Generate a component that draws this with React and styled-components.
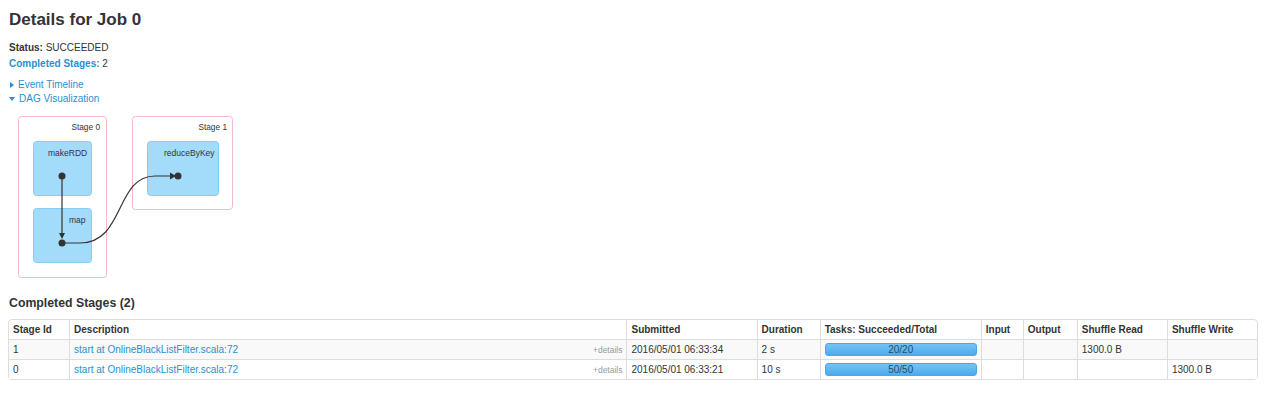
import React from 'react'
import styled, { createGlobalStyle } from 'styled-components'

const GlobalStyle = createGlobalStyle`
  body {
    margin: 0;
    background: #fff;
    font-family: "Liberation Sans", Arial, sans-serif;
    color: #333;
  }
`

const linkBlue = '#2a8fd0'

const Page = styled.div`
  padding: 0 8px 20px 8px;
  font-size: 10px;
`

const Title = styled.h3`
  margin: 10px 0 0 1px;
  font-size: 17px;
  line-height: 20px;
  font-weight: 700;
  color: #333;
`

const Summary = styled.ul`
  list-style: none;
  margin: 10px 0 0 1px;
  padding: 0;
  line-height: 16px;
`

const Label = styled.strong`
  color: ${props => props.link ? linkBlue : '#333'};
`

const Toggles = styled.div`
  margin: 6px 0 0 1px;
  line-height: 14px;
`

const Toggle = styled.a`
  display: flex;
  align-items: center;
  gap: 4px;
  color: ${linkBlue};
  text-decoration: none;
  cursor: pointer;
`

const Arrow = styled.span`
  display: inline-block;
  width: 0;
  height: 0;
  ${props => props.open ? `
    border-left: 3px solid transparent;
    border-right: 3px solid transparent;
    border-top: 4px solid ${linkBlue};
  ` : `
    border-top: 3px solid transparent;
    border-bottom: 3px solid transparent;
    border-left: 4px solid ${linkBlue};
    margin-left: 1px;
  `}
`

const Graph = styled.svg`
  display: block;
  margin-top: 4px;
  font-family: "Liberation Sans", Arial, sans-serif;
`

const Heading = styled.h4`
  margin: 13px 0 0 1px;
  font-size: 12.3px;
  line-height: 16px;
  font-weight: 700;
  color: #333;
`

const Table = styled.table`
  margin-top: 8px;
  width: 1250px;
  table-layout: fixed;
  border-collapse: separate;
  border-spacing: 0;
  border: 1px solid #ddd;
  border-radius: 4px;
  font-size: 10px;
`

const Th = styled.th`
  height: 19px;
  padding: 0 4px;
  text-align: left;
  font-weight: 700;
  border-left: ${props => props.first ? 'none' : '1px solid #ddd'};
`

const Row = styled.tr`
  background: ${props => props.odd ? '#f9f9f9' : '#fff'};
`

const Td = styled.td`
  height: 19px;
  padding: 0 4px;
  border-top: 1px solid #ddd;
  border-left: ${props => props.first ? 'none' : '1px solid #ddd'};
  white-space: nowrap;
`

const DescCell = styled.div`
  display: flex;
  justify-content: space-between;
  align-items: center;
`

const Link = styled.a`
  color: ${linkBlue};
  text-decoration: none;
`

const Details = styled.span`
  font-size: 8.5px;
  color: #999;
`

const Progress = styled.div`
  height: 13px;
  border-radius: 3px;
  background: linear-gradient(to bottom, #72c4f6, #4eaaec);
  border: 1px solid #4aa6e6;
  box-sizing: border-box;
  display: flex;
  align-items: center;
  justify-content: center;
  color: #2d4a60;
  font-size: 10px;
`

const columns = [60, 557, 130, 63, 161, 42, 54, 90, 90]
const headers = [
  'Stage Id', 'Description', 'Submitted', 'Duration', 'Tasks: Succeeded/Total',
  'Input', 'Output', 'Shuffle Read', 'Shuffle Write',
]

const stages = [
  { id: 1, submitted: '2016/05/01 06:33:34', duration: '2 s', tasks: '20/20', read: '1300.0 B', write: '' },
  { id: 0, submitted: '2016/05/01 06:33:21', duration: '10 s', tasks: '50/50', read: '', write: '1300.0 B' },
]

const clusterStroke = '#f4bcc8'
const nodeFill = '#a3dcfb'
const nodeStroke = '#86cdf5'

// job graph: two stage clusters, RDD nodes, and the shuffle edge between them
const DagGraph = () => (
  <Graph width="240" height="172" viewBox="0 0 240 172">
    <rect x="10.5" y="6.5" width="88" height="161" rx="3" fill="#fff" stroke={clusterStroke} />
    <rect x="124.5" y="6.5" width="100" height="93" rx="3" fill="#fff" stroke={clusterStroke} />
    <text x="92" y="20" fontSize="8.3" fill="#333" textAnchor="end">Stage 0</text>
    <text x="219" y="20" fontSize="8.3" fill="#333" textAnchor="end">Stage 1</text>

    <rect x="25.5" y="31.5" width="58" height="54" rx="3" fill={nodeFill} stroke={nodeStroke} />
    <rect x="25.5" y="98.5" width="58" height="54" rx="3" fill={nodeFill} stroke={nodeStroke} />
    <rect x="139.5" y="31.5" width="71" height="54" rx="3" fill={nodeFill} stroke={nodeStroke} />
    <text x="40" y="46" fontSize="8.5" fill="#333">makeRDD</text>
    <text x="61" y="113" fontSize="8.5" fill="#333">map</text>
    <text x="156" y="46" fontSize="8.5" fill="#333">reduceByKey</text>

    <path d="M54 66 L54 124" stroke="#333" strokeWidth="1.2" fill="none" />
    <path d="M51 123 L57 123 L54 129 Z" fill="#333" />
    <path d="M54 133 L72 133 C117 133 107 66 147 66 L163 66" stroke="#333" strokeWidth="1.2" fill="none" />
    <path d="M162 62.5 L162 69.5 L168 66 Z" fill="#333" />

    <circle cx="54" cy="66" r="3.5" fill="#333" />
    <circle cx="54" cy="133" r="3.5" fill="#333" />
    <circle cx="170" cy="66" r="3.5" fill="#333" />
  </Graph>
)

const App = () => (
  <Page>
    <GlobalStyle />
    <Title>Details for Job 0</Title>
    <Summary>
      <li><Label>Status:</Label> SUCCEEDED</li>
      <li><Label link>Completed Stages:</Label> 2</li>
    </Summary>
    <Toggles>
      <Toggle><Arrow />Event Timeline</Toggle>
      <Toggle><Arrow open />DAG Visualization</Toggle>
    </Toggles>
    <DagGraph />
    <Heading>Completed Stages (2)</Heading>
    <Table>
      <colgroup>
        {columns.map((w, i) => <col key={i} style={{ width: w }} />)}
      </colgroup>
      <thead>
        <tr>
          {headers.map((h, i) => <Th key={h} first={i === 0}>{h}</Th>)}
        </tr>
      </thead>
      <tbody>
        {stages.map((s, i) => (
          <Row key={s.id} odd={i % 2 === 0}>
            <Td first>{s.id}</Td>
            <Td>
              <DescCell>
                <Link>start at OnlineBlackListFilter.scala:72</Link>
                <Details>+details</Details>
              </DescCell>
            </Td>
            <Td>{s.submitted}</Td>
            <Td>{s.duration}</Td>
            <Td><Progress>{s.tasks}</Progress></Td>
            <Td />
            <Td />
            <Td>{s.read}</Td>
            <Td>{s.write}</Td>
          </Row>
        ))}
      </tbody>
    </Table>
  </Page>
)

export default App
